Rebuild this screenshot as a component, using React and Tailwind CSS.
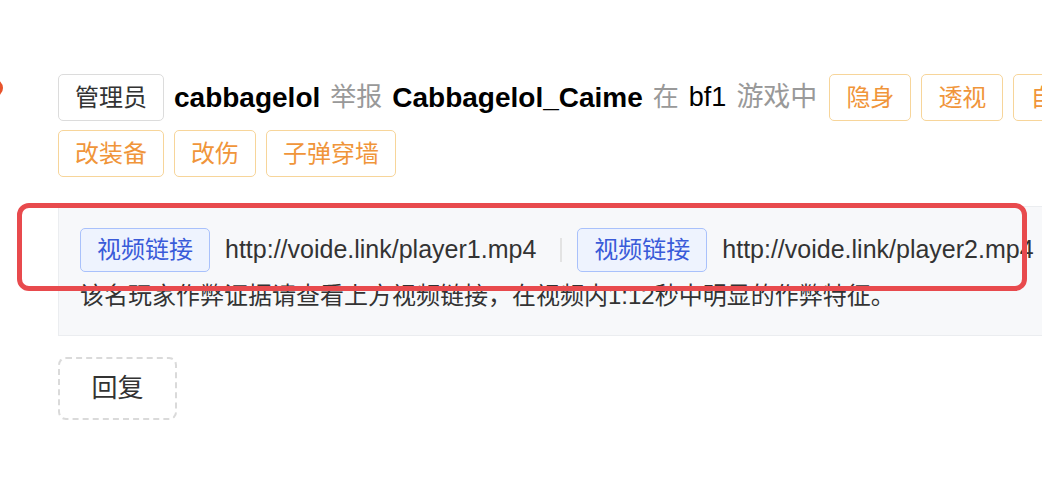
import React from "react";

const font = { fontFamily: '"Liberation Sans", "Noto Sans CJK SC", sans-serif' };

function Tag({ children, tone = "gray" }) {
  const cls =
    tone === "orange"
      ? "border-[#f7d59a] text-[#f0953a]"
      : "border-[#dcdcdc] text-[#333333]";
  return (
    <span
      className={`inline-flex h-[47px] items-center rounded-[5px] border-[1.5px] bg-white px-[16px] text-[24px] leading-none ${cls}`}
    >
      {children}
    </span>
  );
}

function LinkTag() {
  return (
    <span className="inline-flex h-[44px] items-center rounded-[5px] border-[1.5px] border-[#a9c1fb] bg-[#eef3fe] px-[16px] text-[24px] leading-none text-[#3a5bd9]">
      视频链接
    </span>
  );
}

export default function App() {
  return (
    <div
      className="relative h-[498px] w-[1042px] overflow-hidden bg-white"
      style={font}
    >
      <div className="absolute left-[-15px] top-[79px] h-[18px] w-[18px] rounded-full bg-[#e8532b]" />

      <div className="w-[1140px] pl-[58px] pt-[74px]">
        <div className="flex flex-wrap items-center gap-x-[10px] gap-y-[9px]">
          <Tag>管理员</Tag>
          <span className="text-[28px] font-bold text-black">cabbagelol</span>
          <span className="text-[26px] text-[#999999]">举报</span>
          <span className="text-[28px] font-bold text-black">Cabbagelol_Caime</span>
          <span className="text-[26px] text-[#999999]">在</span>
          <span className="text-[27px] text-black">bf1</span>
          <span className="mr-[2px] text-[27px] text-[#999999]">游戏中</span>
          <Tag tone="orange">隐身</Tag>
          <Tag tone="orange">透视</Tag>
          <Tag tone="orange">自瞄</Tag>
          <Tag tone="orange">改装备</Tag>
          <Tag tone="orange">改伤</Tag>
          <Tag tone="orange">子弹穿墙</Tag>
        </div>

        <div className="mt-[29px] border border-[#ebedf0] bg-[#f7f8fa] px-[21px] pb-[21px] pt-[21px]">
          <div className="flex items-center gap-[15px] text-[25px] text-[#333333]">
            <LinkTag />
            <span>http://voide.link/player1.mp4</span>
            <span className="ml-[9px] h-[24px] w-[2px] bg-[#e3e3e3]" />
            <LinkTag />
            <span className="whitespace-nowrap">http://voide.link/player2.mp4</span>
          </div>
          <div className="mt-[6px] text-[24px] leading-[36px] text-[#333333]">
            该名玩家作弊证据请查看上方视频链接，在视频内1:12秒中明显的作弊特征。
          </div>
        </div>

        <div className="mt-[21px] inline-flex h-[63px] w-[119px] items-center justify-center rounded-[8px] border-2 border-dashed border-[#dadada] text-[26px] text-[#333333]">
          回复
        </div>
      </div>

      <div className="pointer-events-none absolute left-[17px] top-[203px] h-[88px] w-[1010px] rounded-[12px] border-[5px] border-[#e84a4d]" />
    </div>
  );
}
